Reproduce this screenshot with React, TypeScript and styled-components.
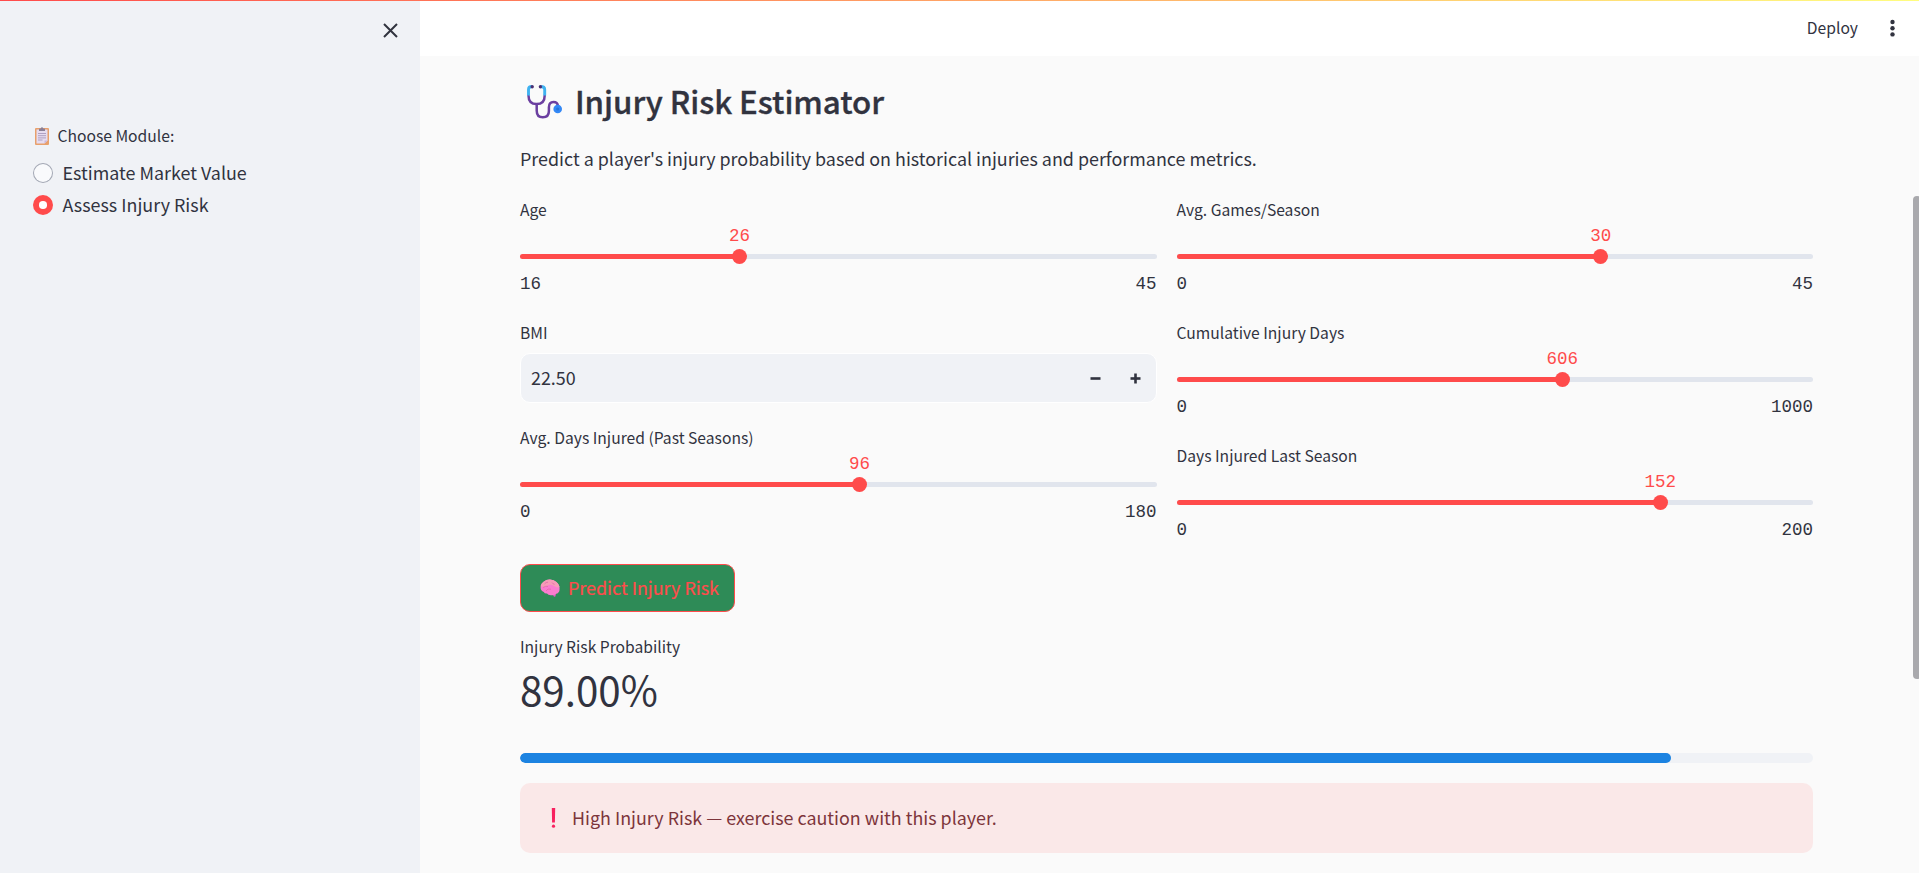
import React from "react";
import styled, { createGlobalStyle } from "styled-components";

const SANS = `"Noto Sans CJK SC", sans-serif`;
const MONO = `"Liberation Mono", monospace`;

const Global = createGlobalStyle`
  *, *::before, *::after { box-sizing: border-box; }
  html, body { margin: 0; height: 100%; }
  body { font-family: ${SANS}; color: #31333f; background: #fafafa; overflow: hidden; }
  h3, p { margin: 0; }
`;

const Shell = styled.div`
  position: relative;
  display: flex;
  height: 873px;
  overflow: hidden;
`;
const Decoration = styled.div`
  position: absolute;
  inset: 0 0 auto 0;
  height: 1px;
  background: linear-gradient(90deg, #ff4b4b, #fffd80);
`;
const Sidebar = styled.aside`
  width: 420px;
  flex: none;
  background: #f0f2f6;
  padding: 20px 19px 0 33px;
`;
const CloseRow = styled.div`
  display: flex;
  justify-content: flex-end;
  height: 102px;
`;
const Text = styled.span<{ $size?: number; $line?: number }>`
  display: block;
  white-space: nowrap;
  font-size: ${(p) => p.$size ?? 17.9}px;
  line-height: ${(p) => p.$line ?? 32}px;
`;
const RowText = styled(Text)`
  padding-bottom: 2px;
`;
const ModuleLabel = styled.div`
  display: flex;
  align-items: center;
  gap: 8.5px;
  padding-left: 2px;
  height: 28px;
  margin-bottom: 7px;
`;
const RadioRow = styled.label`
  display: flex;
  align-items: center;
  gap: 9.5px;
  height: 32px;
`;
const RadioDot = styled.span<{ $on?: boolean }>`
  width: 20px;
  height: 20px;
  border-radius: 50%;
  display: grid;
  place-items: center;
  background: ${(p) => (p.$on ? "#ff4b4b" : "#a3a8b4")};
  &::after {
    content: "";
    width: ${(p) => (p.$on ? 7.5 : 18)}px;
    height: ${(p) => (p.$on ? 7.5 : 18)}px;
    margin: ${(p) => (p.$on ? "0" : "0 1px 1px 0")};
    border-radius: 50%;
    background: ${(p) => (p.$on ? "#fff" : "#f9fafc")};
  }
`;
const Main = styled.main`
  flex: 1;
  min-width: 0;
`;
const Header = styled.header`
  height: 56px;
  background: #fff;
  display: flex;
  align-items: center;
  justify-content: flex-end;
  gap: 30px;
  padding-right: 22px;
`;
const Content = styled.div`
  padding: 22px 106px 0 100px;
`;
const Title = styled.h3`
  display: flex;
  align-items: center;
  gap: 12px;
  height: 48px;
  padding-left: 7px;
  font-size: 31.3px;
  font-weight: 500;
  letter-spacing: -0.06px;
  -webkit-text-stroke: 0.35px #31333f;
  margin-bottom: 16px;
  white-space: nowrap;
`;
const TitleText = styled.span`
  line-height: 48px;
  padding-bottom: 2px;
`;
const Columns = styled.div`
  display: grid;
  grid-template-columns: 1fr 1fr;
  column-gap: 20px;
  margin-top: 22px;
`;
const Column = styled.div`
  display: flex;
  flex-direction: column;
  gap: 20px;
`;
const Label = styled.div`
  font-size: 15.65px;
  line-height: 28px;
  height: 28px;
  white-space: nowrap;
`;
const SliderBox = styled.div`
  height: 103px;
`;
const ValueRow = styled.div`
  height: 25px;
`;
const ValueText = styled.div`
  width: 60px;
  margin-left: -30px;
  text-align: center;
  font-family: ${MONO};
  font-size: 17.5px;
  line-height: 24px;
  color: #ff4b4b;
`;
const Track = styled.div`
  height: 15px;
  display: flex;
  align-items: center;
`;
const Rail = styled.div`
  width: 100%;
  height: 5px;
  border-radius: 3px;
  background: #e1e5ed;
  display: flex;
  align-items: center;
`;
const Fill = styled.div`
  height: 5px;
  border-radius: 3px;
  background: #ff4b4b;
`;
const Thumb = styled.div`
  flex: none;
  width: 15px;
  height: 15px;
  margin-left: -7.5px;
  border-radius: 50%;
  background: #ff4b4b;
`;
const Range = styled.div`
  display: flex;
  justify-content: space-between;
  font-family: ${MONO};
  font-size: 17.5px;
  line-height: 28px;
  margin-top: 6px;
`;
const NumberBox = styled.div`
  height: 85px;
`;
const NumberField = styled.div`
  display: flex;
  align-items: center;
  height: 50px;
  margin-top: 6px;
  border: 1px solid #fff;
  border-radius: 10px;
  background: #f0f2f6;
  padding: 0 14.5px 0 10px;
`;
const Stepper = styled.div`
  display: flex;
  gap: 29px;
  margin-left: auto;
`;
const PredictButton = styled.button`
  display: flex;
  align-items: center;
  gap: 8px;
  width: 215px;
  height: 48px;
  margin-top: 19px;
  padding: 0 0 0 19px;
  border: 1px solid #ff4b4b;
  border-radius: 10px;
  background: #2e8b57;
  color: #ff4b4b;
  font-family: ${SANS};
  font-weight: 400;
  -webkit-text-stroke: 0.2px #ff4b4b;
`;
const Metric = styled.div`
  margin-top: 21px;
`;
const Progress = styled.div`
  height: 10px;
  border-radius: 5px;
  background: #f0f2f6;
  margin-top: 37px;
  overflow: hidden;
`;
const ProgressFill = styled.div`
  height: 10px;
  border-radius: 5px;
  background: #1c83e1;
`;
const Alert = styled.div`
  display: flex;
  align-items: center;
  gap: 16px;
  height: 70px;
  margin-top: 20px;
  padding-left: 31px;
  border-radius: 10px;
  background: #fae8e8;
  color: #7d353b;
`;
const ScrollThumb = styled.div`
  position: absolute;
  left: 1913px;
  top: 196px;
  width: 8px;
  height: 483px;
  border-radius: 4px;
  background: #a9a9ad;
`;

const CloseIcon = () => (
  <svg width="21" height="21" viewBox="0 0 21 21" fill="none" stroke="#31333f" strokeWidth="2">
    <path d="M4 4l13 13M17 4L4 17" />
  </svg>
);
const KebabIcon = () => (
  <svg width="9" height="20" viewBox="0 0 9 20" fill="#31333f">
    <circle cx="4.5" cy="4" r="2.2" />
    <circle cx="4.5" cy="10.2" r="2.2" />
    <circle cx="4.5" cy="16.4" r="2.2" />
  </svg>
);
const ClipboardIcon = () => (
  <svg width="14" height="18" viewBox="0 0 14 18">
    <rect x="0" y="1" width="14" height="17" rx="1" fill="#e8a06c" />
    <path d="M1.5 2.5h11v11l-3 3h-8z" fill="#e6dcf0" />
    <path d="M9.5 16.5v-3h3z" fill="#c9b5dc" />
    <path d="M4 4V2.200q0-.7.8-.7h1Q6 .3 7 .3t1.200 1.200h1q.8 0 .8.7V4z" fill="#8a7f96" />
    <path d="M3 6.500h8M3 8.700h8M3 10.900h8M3 13h4.500" stroke="#a999bd" strokeWidth=".9" />
  </svg>
);
const StethoscopeIcon = () => (
  <svg width="36" height="34" viewBox="0 0 36 34" fill="none" strokeLinecap="round">
    <path d="M1.500 10.500q0 8.600 8.100 8.600t8.100-8.600" stroke="#6b3fa0" strokeWidth="2.500" />
    <path d="M9.700 19.500v6q0 6.800 6.100 6.800t6.100-6.300v-3.800q0-5.300 4.600-5.300 4 0 4.400 3.600" stroke="#6b3fa0" strokeWidth="2.500" />
    <path d="M5 1.500Q1.500 1.500 1.500 4.500V10.500M13.600 1.500q4.100 0 4.100 3v6" stroke="#3fb2f0" strokeWidth="2.900" strokeLinecap="butt" />
    <circle cx="5.200" cy="1.800" r="1.700" fill="#4a2f73" />
    <circle cx="13.400" cy="1.800" r="1.700" fill="#4a2f73" />
    <circle cx="30.700" cy="24" r="4.300" fill="#3388f5" />
    <circle cx="30.700" cy="24" r="1.600" fill="#2573dc" />
  </svg>
);
const BrainIcon = () => (
  <svg width="20" height="18" viewBox="0 0 20 18">
    <path d="M12 13l4.300-.6-.9 5.200-1.400.2-1.500-2.500z" fill="#e05fc4" />
    <path d="M.6 8.500Q.4 4.800 3.600 2.700 6.400.2 10 .4q4 0 6.400 2.700 3.300 2.600 3.200 6.400.1 4.600-3.300 5.300-2 1.800-4.600 1.400-3.500.3-4.700-1.600-2.500.2-3.200-1.600Q.6 11.600.6 8.500z" fill="#fb7cd0" />
    <path d="M.8 7Q1.400 4 3.600 2.700 6.400.2 10 .4q4 0 6.400 2.700 2.600 2 3.100 5-3 1-5.500-1.100-5-2.500-8 .5-2.700 1-5.200-.5z" fill="#f79cb8" />
    <path d="M3 8.500q3-2 5-1M6 12q1.500-3 5-1.800M12 3.500q.6 1.500 2.600 1.800M4.500 5q1.500-2 3.500-1.800" fill="none" stroke="#e26ba8" strokeWidth=".8" />
  </svg>
);
const ExclamationIcon = () => (
  <svg width="5" height="20" viewBox="0 0 5 20" fill="#f8215f">
    <path d="M.8 0h3.400L3.900 14.600H1.100z" />
    <circle cx="2.500" cy="18.200" r="1.600" />
  </svg>
);
const MinusIcon = () => (
  <svg width="11" height="11" viewBox="0 0 11 11" fill="#31333f">
    <rect x=".5" y="4.200" width="10" height="2.600" />
  </svg>
);
const PlusIcon = () => (
  <svg width="11" height="11" viewBox="0 0 11 11" fill="#31333f">
    <rect x=".5" y="4.200" width="10" height="2.600" />
    <rect x="4.200" y=".5" width="2.600" height="10" />
  </svg>
);

type SliderProps = { label: string; min: number; max: number; value: number };
function Slider({ label, min, max, value }: SliderProps) {
  const pct = `${((value - min) / (max - min)) * 100}%`;
  return (
    <SliderBox>
      <Label>{label}</Label>
      <ValueRow style={{ paddingLeft: pct }}>
        <ValueText>{value}</ValueText>
      </ValueRow>
      <Track>
        <Rail>
          <Fill style={{ width: pct }} />
          <Thumb />
        </Rail>
      </Track>
      <Range>
        <span>{min}</span>
        <span>{max}</span>
      </Range>
    </SliderBox>
  );
}

export default function App() {
  return (
    <>
      <Global />
      <Shell>
        <Sidebar>
          <CloseRow>
            <CloseIcon />
          </CloseRow>
          <ModuleLabel>
            <ClipboardIcon />
            <Text $size={15.65} $line={28}>Choose Module:</Text>
          </ModuleLabel>
          <RadioRow>
            <RadioDot />
            <RowText>Estimate Market Value</RowText>
          </RadioRow>
          <RadioRow>
            <RadioDot $on />
            <RowText>Assess Injury Risk</RowText>
          </RadioRow>
        </Sidebar>
        <Main>
          <Header>
            <Text $size={15.65} $line={28}>Deploy</Text>
            <KebabIcon />
          </Header>
          <Content>
            <Title>
              <StethoscopeIcon />
              <TitleText>Injury Risk Estimator</TitleText>
            </Title>
            <Text>Predict a player's injury probability based on historical injuries and performance metrics.</Text>
            <Columns>
              <Column>
                <Slider label="Age" min={16} max={45} value={26} />
                <NumberBox>
                  <Label>BMI</Label>
                  <NumberField>
                    <RowText>22.50</RowText>
                    <Stepper>
                      <MinusIcon />
                      <PlusIcon />
                    </Stepper>
                  </NumberField>
                </NumberBox>
                <Slider label="Avg. Days Injured (Past Seasons)" min={0} max={180} value={96} />
              </Column>
              <Column>
                <Slider label="Avg. Games/Season" min={0} max={45} value={30} />
                <Slider label="Cumulative Injury Days" min={0} max={1000} value={606} />
                <Slider label="Days Injured Last Season" min={0} max={200} value={152} />
              </Column>
            </Columns>
            <PredictButton>
              <BrainIcon />
              <RowText>Predict Injury Risk</RowText>
            </PredictButton>
            <Metric>
              <Text $size={15.65} $line={28}>Injury Risk Probability</Text>
              <Text $size={40.3} $line={55}>89.00%</Text>
            </Metric>
            <Progress>
              <ProgressFill style={{ width: "89%" }} />
            </Progress>
            <Alert>
              <ExclamationIcon />
              <RowText>High Injury Risk — exercise caution with this player.</RowText>
            </Alert>
          </Content>
        </Main>
        <ScrollThumb />
        <Decoration />
      </Shell>
    </>
  );
}
